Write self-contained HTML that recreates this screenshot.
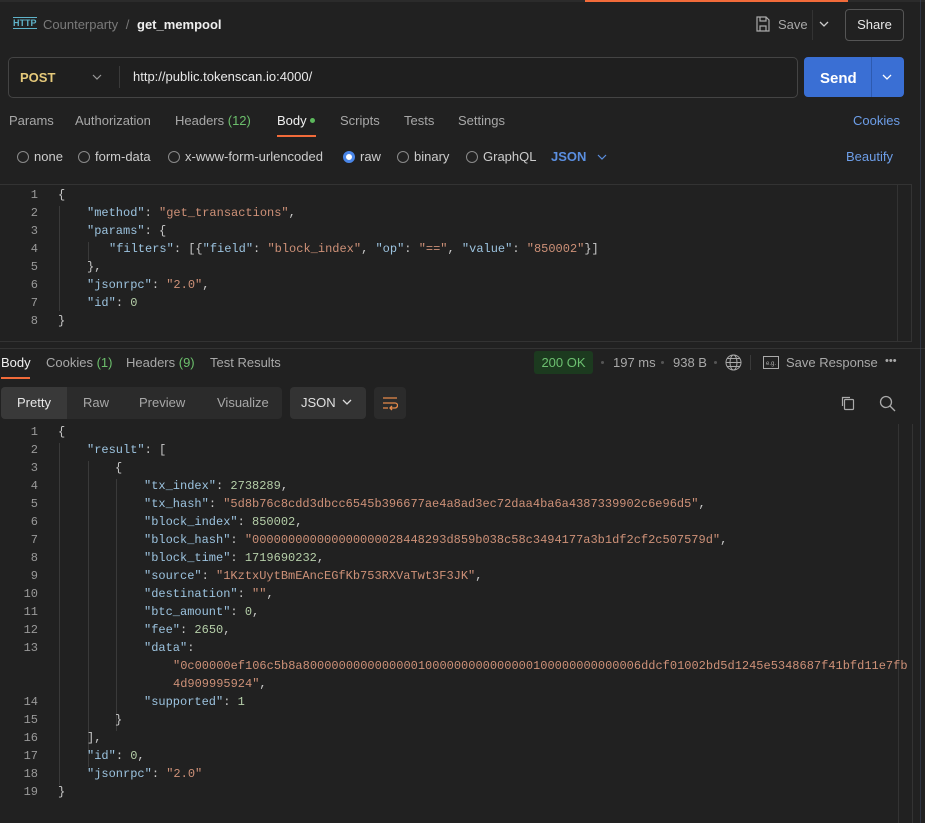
<!DOCTYPE html>
<html><head><meta charset="utf-8">
<style>
*{box-sizing:border-box;margin:0;padding:0}
body{width:925px;height:823px;background:#212121;font-family:"Liberation Sans",sans-serif;color:#d6d6d6;position:relative;overflow:hidden;font-size:13px}
.abs{position:absolute}
.mono{font-family:"Liberation Mono",monospace;font-size:12px}
.code .ln{position:absolute;left:0;width:38px;text-align:right;color:#9a9a9a}
.code .l{position:absolute;white-space:pre;color:#c8c8c8}
.k{color:#9cc3df}.s{color:#ce9178}.n{color:#b5cea8}
.tab{position:absolute;font-size:13px;color:#a8a8a8}
.guide{position:absolute;width:1px;background:#3a3a3a}
.radio{position:absolute;width:12px;height:12px;border:1px solid #8a8a8a;border-radius:50%}
</style></head><body>
<div class="abs" style="left:0;top:0;width:925px;height:2px;background:#2b2b2b"></div>
<div class="abs" style="left:585px;top:0;width:263px;height:2px;background:#f26b3a"></div>

<div class="abs" style="left:13px;top:17px;font-size:9px;color:#5fb3c9;font-weight:bold;border-top:1px solid #5fb3c9;border-bottom:1px solid #5fb3c9;line-height:10px">HTTP</div>
<div class="abs" style="left:43px;top:17px;font-size:13px;color:#7a7a7a">Counterparty <span style="margin:0 4px">/</span> <span style="color:#f0f0f0;font-weight:bold">get_mempool</span></div>
<svg class="abs" style="left:756px;top:16px" width="14" height="16" viewBox="0 0 14 16"><path d="M1 1h9l3 3v11H1z M4 1v4h6V1 M4 15v-5h6v5" fill="none" stroke="#aaa" stroke-width="1.2"/></svg>
<div class="abs" style="left:778px;top:17px;color:#a8a8a8">Save</div>
<div class="abs" style="left:812px;top:10px;width:1px;height:30px;background:#333"></div>
<svg class="abs" style="left:819px;top:20px" width="10" height="8"><path d="M1 2l4 4 4-4" fill="none" stroke="#ccc" stroke-width="1.3"/></svg>
<div class="abs" style="left:845px;top:9px;width:59px;height:32px;border:1px solid #555;border-radius:4px;text-align:center;line-height:30px;color:#e8e8e8">Share</div>

<div class="abs" style="left:8px;top:57px;width:790px;height:41px;border:1px solid #444;border-radius:5px;background:#1f1f1f"></div>
<div class="abs" style="left:20px;top:70px;color:#e5c97a;font-weight:bold;font-size:13px">POST</div>
<svg class="abs" style="left:92px;top:74px" width="10" height="7"><path d="M1 1l4 4 4-4" fill="none" stroke="#999" stroke-width="1.2"/></svg>
<div class="abs" style="left:119px;top:66px;width:1px;height:22px;background:#3a3a3a"></div>
<div class="abs" style="left:133px;top:69px;color:#e8e8e8;font-size:13px">http://public.tokenscan.io:4000/</div>
<div class="abs" style="left:804px;top:57px;width:100px;height:40px;background:#3a6fd4;border-radius:4px"></div>
<div class="abs" style="left:871px;top:57px;width:1px;height:40px;background:#2d5ab0"></div>
<div class="abs" style="left:820px;top:70px;color:#fff;font-weight:bold;font-size:15px">Send</div>
<svg class="abs" style="left:882px;top:74px" width="10" height="7"><path d="M1 1l4 4 4-4" fill="none" stroke="#fff" stroke-width="1.3"/></svg>

<div class="tab" style="left:9px;top:113px">Params</div>
<div class="tab" style="left:75px;top:113px">Authorization</div>
<div class="tab" style="left:175px;top:113px">Headers <span style="color:#6cbf6c">(12)</span></div>
<div class="tab" style="left:277px;top:113px;color:#f0f0f0">Body</div>
<div class="abs" style="left:310px;top:118px;width:5px;height:5px;border-radius:50%;background:#5cb85c"></div>
<div class="abs" style="left:277px;top:135px;width:39px;height:2px;background:#f26b3a"></div>
<div class="tab" style="left:340px;top:113px">Scripts</div>
<div class="tab" style="left:404px;top:113px">Tests</div>
<div class="tab" style="left:458px;top:113px">Settings</div>
<div class="tab" style="left:853px;top:113px;color:#6d9ee8">Cookies</div>

<div class="radio" style="left:17px;top:151px"></div><div class="tab" style="left:34px;top:149px;color:#ccc">none</div>
<div class="radio" style="left:78px;top:151px"></div><div class="tab" style="left:95px;top:149px;color:#ccc">form-data</div>
<div class="radio" style="left:168px;top:151px"></div><div class="tab" style="left:185px;top:149px;color:#ccc">x-www-form-urlencoded</div>
<div class="radio" style="left:343px;top:151px;border:3px solid #4a86e8;background:#fff"></div><div class="tab" style="left:360px;top:149px;color:#ccc">raw</div>
<div class="radio" style="left:397px;top:151px"></div><div class="tab" style="left:414px;top:149px;color:#ccc">binary</div>
<div class="radio" style="left:466px;top:151px"></div><div class="tab" style="left:483px;top:149px;color:#ccc">GraphQL</div>
<div class="tab" style="left:551px;top:149px;color:#5b8fe0;font-weight:bold">JSON</div>
<svg class="abs" style="left:597px;top:154px" width="10" height="7"><path d="M1 1l4 4 4-4" fill="none" stroke="#5b8fe0" stroke-width="1.2"/></svg>
<div class="tab" style="left:846px;top:149px;color:#6d9ee8">Beautify</div>

<div class="abs" style="left:0;top:184px;width:912px;height:158px;border:1px solid #333;border-left:none"></div>
<div class="abs" style="left:897px;top:184px;width:1px;height:158px;background:#333"></div>
<div class="abs" style="left:0;top:348px;width:925px;height:1px;background:#333"></div>
<div class="guide" style="left:59px;top:206px;height:105px"></div>
<div class="guide" style="left:88px;top:242px;height:18px"></div>
<div class="code mono abs" style="left:0;top:188px;width:900px;height:150px">
<div class="ln" style="top:0">1</div><div class="l" style="left:58px;top:0">{</div>
<div class="ln" style="top:18px">2</div><div class="l" style="left:87px;top:18px"><span class="k">"method"</span>: <span class="s">"get_transactions"</span>,</div>
<div class="ln" style="top:36px">3</div><div class="l" style="left:87px;top:36px"><span class="k">"params"</span>: {</div>
<div class="ln" style="top:54px">4</div><div class="l" style="left:109px;top:54px"><span class="k">"filters"</span>: [{<span class="k">"field"</span>: <span class="s">"block_index"</span>, <span class="k">"op"</span>: <span class="s">"=="</span>, <span class="k">"value"</span>: <span class="s">"850002"</span>}]</div>
<div class="ln" style="top:72px">5</div><div class="l" style="left:87px;top:72px">},</div>
<div class="ln" style="top:90px">6</div><div class="l" style="left:87px;top:90px"><span class="k">"jsonrpc"</span>: <span class="s">"2.0"</span>,</div>
<div class="ln" style="top:108px">7</div><div class="l" style="left:87px;top:108px"><span class="k">"id"</span>: <span class="n">0</span></div>
<div class="ln" style="top:126px">8</div><div class="l" style="left:58px;top:126px">}</div>
</div>

<div class="tab" style="left:1px;top:355px;color:#f0f0f0">Body</div>
<div class="abs" style="left:1px;top:377px;width:29px;height:2px;background:#f26b3a"></div>
<div class="tab" style="left:46px;top:355px">Cookies <span style="color:#6cbf6c">(1)</span></div>
<div class="tab" style="left:126px;top:355px">Headers <span style="color:#6cbf6c">(9)</span></div>
<div class="tab" style="left:210px;top:355px">Test Results</div>
<div class="abs" style="left:534px;top:351px;width:59px;height:23px;background:#1c3a1f;border-radius:3px;color:#6cc070;text-align:center;line-height:23px">200 OK</div>
<div class="abs" style="left:601px;top:361px;width:3px;height:3px;border-radius:50%;background:#555"></div>
<div class="tab" style="left:613px;top:355px">197 ms</div>
<div class="abs" style="left:661px;top:361px;width:3px;height:3px;border-radius:50%;background:#555"></div>
<div class="tab" style="left:673px;top:355px">938 B</div>
<div class="abs" style="left:714px;top:361px;width:3px;height:3px;border-radius:50%;background:#555"></div>
<svg class="abs" style="left:725px;top:354px" width="17" height="17" viewBox="0 0 17 17"><g fill="none" stroke="#aaa" stroke-width="1"><circle cx="8.5" cy="8.5" r="7.5"/><ellipse cx="8.5" cy="8.5" rx="3.5" ry="7.5"/><path d="M1 8.5h15M2.5 4.5h12M2.5 12.5h12"/></g></svg>
<div class="abs" style="left:750px;top:355px;width:1px;height:15px;background:#3a3a3a"></div>
<svg class="abs" style="left:763px;top:356px" width="16" height="13"><rect x="0.5" y="0.5" width="15" height="12" fill="none" stroke="#aaa"/><text x="3" y="9" font-size="6" fill="#aaa" font-family="Liberation Sans">e.g.</text></svg>
<div class="tab" style="left:786px;top:355px">Save Response</div>
<div class="tab" style="left:885px;top:355px;color:#aaa;letter-spacing:0px;font-size:11px">•••</div>

<div class="abs" style="left:1px;top:387px;width:281px;height:32px;background:#2b2b2b;border-radius:4px"></div>
<div class="abs" style="left:1px;top:387px;width:66px;height:32px;background:#393939;border-radius:4px 0 0 4px"></div>
<div class="tab" style="left:17px;top:395px;color:#e8e8e8">Pretty</div>
<div class="tab" style="left:83px;top:395px">Raw</div>
<div class="tab" style="left:139px;top:395px">Preview</div>
<div class="tab" style="left:217px;top:395px">Visualize</div>
<div class="abs" style="left:290px;top:387px;width:76px;height:32px;background:#333;border-radius:4px"></div>
<div class="tab" style="left:301px;top:395px;color:#e0e0e0">JSON</div>
<svg class="abs" style="left:342px;top:399px" width="10" height="7"><path d="M1 1l4 4 4-4" fill="none" stroke="#ddd" stroke-width="1.3"/></svg>
<div class="abs" style="left:374px;top:387px;width:32px;height:32px;background:#2b2b2b;border-radius:4px"></div>
<svg class="abs" style="left:382px;top:395px" width="16" height="16"><path d="M1 3h14M1 8h12a2.5 2.5 0 010 5H9M1 13h5M10 11l-2 2 2 2" fill="none" stroke="#e58a4a" stroke-width="1.3"/></svg>
<svg class="abs" style="left:840px;top:395px" width="16" height="16"><rect x="4.5" y="4.5" width="9" height="10" rx="1" fill="none" stroke="#aaa" stroke-width="1.2"/><path d="M2.5 11V2.5H10" fill="none" stroke="#aaa" stroke-width="1.2"/></svg>
<svg class="abs" style="left:879px;top:395px" width="17" height="17"><circle cx="7" cy="7" r="5.5" fill="none" stroke="#aaa" stroke-width="1.3"/><path d="M11 11l5 5" stroke="#aaa" stroke-width="1.3"/></svg>

<div class="abs" style="left:898px;top:424px;width:1px;height:399px;background:#333"></div>
<div class="abs" style="left:912px;top:424px;width:1px;height:399px;background:#333"></div>
<div class="abs" style="left:920px;top:0;width:1px;height:823px;background:#3d4a66;opacity:.5"></div>
<div class="guide" style="left:59px;top:443px;height:342px"></div>
<div class="guide" style="left:88px;top:461px;height:306px"></div>
<div class="guide" style="left:116px;top:479px;height:252px"></div>
<div class="code mono abs" style="left:0;top:425px;width:900px;height:398px">
<div class="ln" style="top:0">1</div><div class="l" style="left:58px;top:0">{</div>
<div class="ln" style="top:18px">2</div><div class="l" style="left:87px;top:18px"><span class="k">"result"</span>: [</div>
<div class="ln" style="top:36px">3</div><div class="l" style="left:115px;top:36px">{</div>
<div class="ln" style="top:54px">4</div><div class="l" style="left:144px;top:54px"><span class="k">"tx_index"</span>: <span class="n">2738289</span>,</div>
<div class="ln" style="top:72px">5</div><div class="l" style="left:144px;top:72px"><span class="k">"tx_hash"</span>: <span class="s">"5d8b76c8cdd3dbcc6545b396677ae4a8ad3ec72daa4ba6a4387339902c6e96d5"</span>,</div>
<div class="ln" style="top:90px">6</div><div class="l" style="left:144px;top:90px"><span class="k">"block_index"</span>: <span class="n">850002</span>,</div>
<div class="ln" style="top:108px">7</div><div class="l" style="left:144px;top:108px"><span class="k">"block_hash"</span>: <span class="s">"000000000000000000028448293d859b038c58c3494177a3b1df2cf2c507579d"</span>,</div>
<div class="ln" style="top:126px">8</div><div class="l" style="left:144px;top:126px"><span class="k">"block_time"</span>: <span class="n">1719690232</span>,</div>
<div class="ln" style="top:144px">9</div><div class="l" style="left:144px;top:144px"><span class="k">"source"</span>: <span class="s">"1KztxUytBmEAncEGfKb753RXVaTwt3F3JK"</span>,</div>
<div class="ln" style="top:162px">10</div><div class="l" style="left:144px;top:162px"><span class="k">"destination"</span>: <span class="s">""</span>,</div>
<div class="ln" style="top:180px">11</div><div class="l" style="left:144px;top:180px"><span class="k">"btc_amount"</span>: <span class="n">0</span>,</div>
<div class="ln" style="top:198px">12</div><div class="l" style="left:144px;top:198px"><span class="k">"fee"</span>: <span class="n">2650</span>,</div>
<div class="ln" style="top:216px">13</div><div class="l" style="left:144px;top:216px"><span class="k">"data"</span>:</div>
<div class="l" style="left:173px;top:234px"><span class="s">"0c00000ef106c5b8a80000000000000001000000000000000100000000000006ddcf01002bd5d1245e5348687f41bfd11e7fb</span></div>
<div class="l" style="left:173px;top:252px"><span class="s">4d909995924"</span>,</div>
<div class="ln" style="top:270px">14</div><div class="l" style="left:144px;top:270px"><span class="k">"supported"</span>: <span class="n">1</span></div>
<div class="ln" style="top:288px">15</div><div class="l" style="left:115px;top:288px">}</div>
<div class="ln" style="top:306px">16</div><div class="l" style="left:87px;top:306px">],</div>
<div class="ln" style="top:324px">17</div><div class="l" style="left:87px;top:324px"><span class="k">"id"</span>: <span class="n">0</span>,</div>
<div class="ln" style="top:342px">18</div><div class="l" style="left:87px;top:342px"><span class="k">"jsonrpc"</span>: <span class="s">"2.0"</span></div>
<div class="ln" style="top:360px">19</div><div class="l" style="left:58px;top:360px">}</div>
</div>
</body></html>
